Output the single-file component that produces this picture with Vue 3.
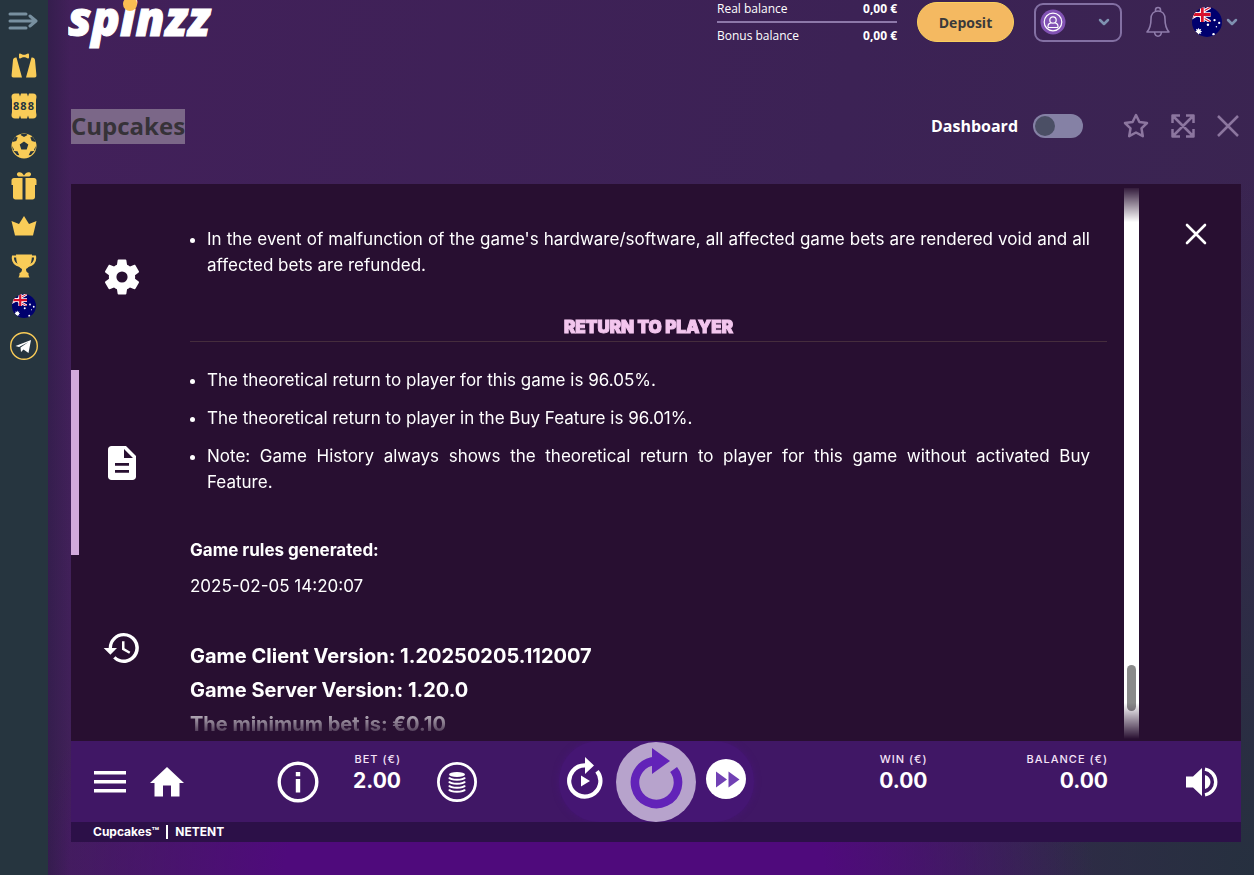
<template>
  <div class="page">
    <!-- shared flag symbol -->
    <svg class="defs" aria-hidden="true">
      <defs>
        <clipPath id="flagRound"><circle cx="16" cy="16" r="16" /></clipPath>
        <clipPath id="flagCanton"><rect width="20" height="16" /></clipPath>
        <symbol id="flag-au" viewBox="0 0 32 32">
          <g clip-path="url(#flagRound)">
            <rect width="32" height="32" fill="#00006e" />
            <g clip-path="url(#flagCanton)">
              <path d="M-8 0 20 16M20 0-8 16" stroke="#fff" stroke-width="3.4" />
              <path d="M-8 0 20 16M20 0-8 16" stroke="#d8102c" stroke-width="1.2" />
              <path d="M11 0v16M0 8h20" stroke="#fff" stroke-width="5" />
              <path d="M11 0v16M0 8h20" stroke="#d8102c" stroke-width="3" />
            </g>
            <path d="m7 22 .9 2 2-.8-.9 2 2 .9-2 .8.9 2-2-.8-.9 2-.8-2-2 .8.8-2-2-.8 2-.9-.8-2 2 .8z" fill="#fff" />
            <g fill="#fff">
              <circle cx="17" cy="19" r="1.3" />
              <circle cx="24" cy="14" r="1.2" />
              <circle cx="29" cy="17" r="1.2" />
              <circle cx="26" cy="21" r=".8" />
              <circle cx="23" cy="29" r="1.3" />
            </g>
          </g>
        </symbol>
      </defs>
    </svg>

    <aside class="sidebar">
      <button class="side-toggle" type="button" aria-label="Menu">
        <svg width="30" height="18" viewBox="0 0 30 18" fill="none" stroke="#7890a0" stroke-width="3" stroke-linecap="round" stroke-linejoin="round">
          <path d="M2 2h16M2 9h25M2 16h16M22 4l6 5-6 5" />
        </svg>
      </button>
      <nav class="side-nav">
        <a v-for="item in sideItems" :key="item" href="#" :aria-label="item">
          <svg v-if="item === 'live'" width="26" height="26" viewBox="0 0 26 26" fill="#f9cc58">
            <path d="M8 1.5c0-1 .7-1.3 1.6-.8l2.3 1h2.2l2.3-1c.9-.5 1.6-.2 1.6.8v3c0 .9-.7 1.2-1.6.8l-2.3-1h-2.2l-2.3 1C8.700 5.700 8 5.400 8 4.500z" />
            <path d="M5.500 4.500 11 24.500H2.500C1 24.500.5 23.700.6 22L2 7c.2-1.800 1.500-2.800 3.500-2.500zM20.500 4.500 15 24.500h8.500c1.500 0 2-.8 1.900-2.500L24 7c-.2-1.800-1.500-2.800-3.500-2.500z" />
          </svg>
          <svg v-else-if="item === 'slots'" width="26" height="26" viewBox="0 0 26 26">
            <path d="M4 .5h4l1 3 1-3h6l1 3 1-3h4c2.500 0 3.500 1.500 3.500 3.500l-.5 3v12l.5 3c0 2-1 3.500-3.500 3.500h-4l-1-3-1 3h-6l-1-3-1 3H4C1.500 25.500.5 24 .5 22l.5-3V7l-.5-3C.5 2 1.500.5 4 .5z" fill="#f9cc58" />
            <text x="13" y="17" text-anchor="middle" class="slot-num">888</text>
          </svg>
          <svg v-else-if="item === 'sport'" width="26" height="26" viewBox="0 0 26 26">
            <circle cx="13" cy="13" r="12.500" fill="#f9cc58" />
            <path d="m13 8.500 4.300 3.100-1.600 5h-5.400l-1.600-5zM9.500 2l3.500 2 3.500-2-1-1h-5zM1.500 9l3.800-1 1.400-3.800L4.500 4 1.500 7.500zM24.500 9l-3.800-1-1.400-3.800 2.200-.2 3 3.500zM2.500 18l4 .2 1.800 4-2.300-.2zM23.500 18l-4 .2-1.800 4 2.300-.2zM1 13l2 3.500-1 1.500zM25 13l-2 3.500 1 1.500z" fill="#26353f" />
          </svg>
          <svg v-else-if="item === 'bonus'" width="26" height="30" viewBox="0 0 26 30" fill="#f9cc58">
            <path d="M13 4.500C11.500 1.500 9 .5 7 1.500c-2 1.200-1 4 1.500 4h9c2.500 0 3.500-2.800 1.500-4-2-1-4.500 0-6 3zM3 7h8.500v21.500H4.500c-1.500 0-2.500-1-2.500-2.500V14H.5V9.500C.5 8 1.500 7 3 7zM14.500 7H23c1.500 0 2.500 1 2.500 2.500V14H24v12c0 1.500-1 2.500-2.500 2.500h-7z" />
          </svg>
          <svg v-else-if="item === 'vip'" width="26" height="20" viewBox="0 0 26 20" fill="#f9cc58">
            <path d="M.5 5 8 8l5-8 5 8 7.500-3L22 19.500H4z" />
          </svg>
          <svg v-else-if="item === 'tournaments'" width="26" height="24" viewBox="0 0 26 24">
            <path d="M5.500 2.500H2C1.300 7 3.500 10.500 9 12M20.500 2.500H24c.7 4.500-1.500 8-7 9.500" fill="none" stroke="#f9cc58" stroke-width="2.200" />
            <path d="M5 .5h16c0 7-1.500 12-6 14.500 0 2.200.8 3.500 2.500 4V21l1 2.500h-11l1-2.500v-2c1.700-.5 2.500-1.800 2.500-4C6.500 12.500 5 7.500 5 .5z" fill="#f9cc58" />
          </svg>
          <svg v-else-if="item === 'language'" width="24" height="24"><use href="#flag-au" /></svg>
          <svg v-else width="28" height="28" viewBox="0 0 28 28">
            <circle cx="14" cy="14" r="13.300" fill="none" stroke="#f9cc58" stroke-width="1.400" />
            <path d="M5.500 14 21 8l-2.500 13-5-3.500-2.500 2.500-.5-4.500 8-5.500-9.500 5z" fill="#fff" />
          </svg>
        </a>
      </nav>
    </aside>

    <main class="main">
      <header class="header">
        <a class="logo" href="#" aria-label="spinzz">
          <svg width="160" height="50" viewBox="0 0 160 50">
            <text x="0" y="36" class="logo-text">spinzz</text>
            <circle cx="62" cy="4" r="7" fill="#fbbd52" />
          </svg>
        </a>
        <dl class="balances">
          <div><dt>Real balance</dt><dd>0,00 €</dd></div>
          <div><dt>Bonus balance</dt><dd>0,00 €</dd></div>
        </dl>
        <button class="deposit" type="button">Deposit</button>
        <button class="profile" type="button" aria-label="Profile">
          <svg width="26" height="26" viewBox="0 0 26 26" fill="none" stroke="#fff" stroke-width="1.200">
            <circle cx="13" cy="13" r="12.500" fill="#8253b4" stroke="none" />
            <circle cx="13" cy="13" r="8.800" />
            <circle cx="13" cy="11" r="3.200" />
            <path d="M8 18.500v-1.200c0-2.300 1.500-3.300 3.300-3.500M18 18.500v-1.200c0-2.300-1.500-3.300-3.300-3.500M8 18.500h10" />
          </svg>
          <svg class="chevron" width="12" height="8" viewBox="0 0 12 8"><path d="m2 2 4 4 4-4" /></svg>
        </button>
        <button class="bell" type="button" aria-label="Notifications">
          <svg width="24" height="32" viewBox="0 0 24 32" fill="none" stroke="#8f7cab" stroke-width="1.600" stroke-linejoin="round">
            <path d="M9.500 5.500V4a2.500 2.500 0 0 1 5 0v1.500M12 5c-4.500 0-7 3.500-7 8 0 6-.8 9.500-4 13h22c-3.200-3.500-4-7-4-13 0-4.500-2.500-8-7-8zM8.500 26c.3 2.800 1.500 4.200 3.500 4.200s3.200-1.400 3.500-4.200" />
          </svg>
        </button>
        <button class="locale" type="button" aria-label="Language">
          <svg width="30" height="30"><use href="#flag-au" /></svg>
          <svg class="chevron" width="12" height="8" viewBox="0 0 12 8"><path d="m2 2 4 4 4-4" /></svg>
        </button>
      </header>

      <div class="title-row">
        <h1><span>Cupcakes</span></h1>
        <label class="dashboard">
          Dashboard
          <input v-model="dashboard" type="checkbox" role="switch">
        </label>
        <div class="tools">
          <button type="button" aria-label="Favourite">
            <svg width="26" height="26" viewBox="0 0 26 26"><path d="m13 2 3.400 7 7.600 1-5.500 5.400 1.300 7.800L13 19.500l-6.800 3.700 1.300-7.800L2 10l7.600-1z" /></svg>
          </button>
          <button type="button" aria-label="Fullscreen">
            <svg width="24" height="24" viewBox="0 0 24 24"><path d="M1.500 9V1.500H9M15 1.500h7.500V9M22.500 15v7.500H15M9 22.500H1.500V15M2 2l20 20M22 2 2 22" /></svg>
          </button>
          <button type="button" aria-label="Close game">
            <svg width="22" height="22" viewBox="0 0 22 22"><path d="m1 1 20 20M21 1 1 21" /></svg>
          </button>
        </div>
      </div>

      <section class="game">
        <div class="stage">
          <nav class="tabs">
            <button v-for="tab in tabs" :key="tab" type="button" :class="{ active: tab === activeTab }" :aria-label="tab" @click="activeTab = tab">
              <svg v-if="tab === 'settings'" width="42" height="42" viewBox="0 0 24 24" fill="#fff">
                <path d="M19.430 12.980c.04-.32.07-.64.07-.98s-.03-.66-.07-.98l2.110-1.650c.19-.15.24-.42.12-.64l-2-3.460c-.12-.22-.39-.3-.61-.22l-2.490 1c-.52-.4-1.080-.73-1.690-.98l-.38-2.650C14.460 2.180 14.250 2 14 2h-4c-.25 0-.46.18-.49.42l-.38 2.650c-.61.25-1.170.59-1.690.98l-2.490-1c-.23-.09-.49 0-.61.22l-2 3.460c-.13.22-.07.49.12.64l2.110 1.650c-.04.32-.07.65-.07.98s.03.66.07.98l-2.110 1.650c-.19.15-.24.42-.12.64l2 3.460c.12.22.39.3.61.22l2.490-1c.52.4 1.080.73 1.690.98l.38 2.650c.03.24.24.42.49.42h4c.25 0 .46-.18.49-.42l.38-2.650c.61-.25 1.170-.59 1.690-.98l2.490 1c.23.09.49 0 .61-.22l2-3.460c.12-.22.07-.49-.12-.64zM12 15.200a3.200 3.200 0 1 1 0-6.400 3.200 3.200 0 0 1 0 6.400z" />
              </svg>
              <svg v-else-if="tab === 'rules'" width="28" height="34" viewBox="0 0 28 34">
                <path d="M3.500 0H18l10 10v20.500c0 2-1.500 3.500-3.500 3.500h-21C1.500 34 0 32.500 0 30.500v-27C0 1.500 1.500 0 3.500 0z" fill="#fff" />
                <path d="M16 3v9h9zM7 17h14v2.800H7zM7 24h14v2.800H7z" fill="#280f31" />
              </svg>
              <svg v-else width="40" height="40" viewBox="0 0 24 24" fill="#fff">
                <path d="M13 3a9 9 0 0 0-9 9H1l3.900 3.900.1.100L9 12H6a7 7 0 1 1 2.100 4.900l-1.400 1.400A9 9 0 1 0 13 3zm-1 5v5l4.300 2.500.7-1.200-3.500-2.100V8z" />
              </svg>
            </button>
          </nav>

          <div class="scroller">
            <div class="rules">
              <ul>
                <li>In the event of malfunction of the game's hardware/software, all affected game bets are rendered void and all affected bets are refunded.</li>
              </ul>
              <h2>RETURN TO PLAYER</h2>
              <ul>
                <li v-for="line in rtpLines" :key="line">{{ line }}</li>
              </ul>
              <div class="generated">
                <strong>Game rules generated:</strong>
                <p>2025-02-05 14:20:07</p>
              </div>
              <div class="versions">
                <p>Game Client Version: 1.20250205.112007</p>
                <p>Game Server Version: 1.20.0</p>
                <p>The minimum bet is: €0.10</p>
              </div>
            </div>
            <div class="track"><div class="thumb"></div></div>
          </div>

          <div class="close-col">
            <button type="button" aria-label="Close rules">
              <svg width="22" height="22" viewBox="0 0 22 22" fill="none" stroke="#fff" stroke-width="2.600" stroke-linecap="round"><path d="m2 2 18 18M20 2 2 20" /></svg>
            </button>
          </div>
        </div>

        <div class="bar">
          <div class="bar-left">
            <button type="button" aria-label="Game menu">
              <svg width="32" height="22" viewBox="0 0 32 22" fill="#fff"><path d="M0 0h32v3.500H0zM0 9h32v3.500H0zM0 18h32v3.500H0z" /></svg>
            </button>
            <button class="home" type="button" aria-label="Home">
              <svg width="34" height="30" viewBox="0 0 34 30" fill="#fff"><path d="M17 0 34 16h-4.500v13.500H21v-11h-8v11H4.500V16H0z" /></svg>
            </button>
            <button class="info" type="button" aria-label="Info">
              <svg width="42" height="42" viewBox="0 0 42 42"><circle cx="21" cy="21" r="18.800" fill="none" stroke="#fff" stroke-width="3.400" /><path d="M18.800 11h4.400v4.200h-4.400zM18.800 18h4.400v13.500h-4.400z" fill="#fff" /></svg>
            </button>
            <div class="meter bet"><span>BET (€)</span><b>2.00</b></div>
            <button class="coins" type="button" aria-label="Bet level">
              <svg width="40" height="42" viewBox="0 0 40 42" fill="none" stroke="#fff">
                <circle cx="20" cy="21" r="18.600" stroke-width="2.800" />
                <ellipse cx="20" cy="13.500" rx="8" ry="2.600" fill="#fff" stroke="none" />
                <path d="M12 16.500c2 3 14 3 16 0M12 20.500c2 3 14 3 16 0M12 24.500c2 3 14 3 16 0M12 28.500c2 3 14 3 16 0" stroke-width="2.200" />
              </svg>
            </button>
          </div>

          <div class="bar-mid">
            <button class="side-spin" type="button" aria-label="Autoplay">
              <svg width="36" height="44" viewBox="0 0 36 44">
                <path d="M30 14.300A15.600 15.600 0 1 1 18 8.400" fill="none" stroke="#fff" stroke-width="4.200" />
                <path d="M18 0v17l9-8.500zM14 18.500v11l9-5.500z" fill="#fff" />
              </svg>
            </button>
            <button class="spin" type="button" aria-label="Spin">
              <svg width="80" height="80" viewBox="0 0 80 80">
                <path d="M57.600 27.500A21.500 21.500 0 1 1 40 19" fill="none" stroke="#6223b8" stroke-width="8.600" />
                <path d="M36 6v26l18-13z" fill="#6223b8" />
              </svg>
            </button>
            <button class="side-spin" type="button" aria-label="Fast play">
              <svg width="40" height="40" viewBox="0 0 40 40"><circle cx="20" cy="20" r="20" fill="#fff" /><path d="M10 12.500v16l11-8zM22.500 12.500v16l11-8z" fill="#7141b4" /></svg>
            </button>
          </div>

          <div class="bar-right">
            <div class="meter"><span>WIN (€)</span><b>0.00</b></div>
            <div class="meter balance"><span>BALANCE (€)</span><b>0.00</b></div>
            <button type="button" aria-label="Sound">
              <svg width="34" height="32" viewBox="0 0 34 32" fill="#fff">
                <path d="M1 10.500h7L17 2v28l-9-8.500H1zM20 9c3.500 1 5.500 3.800 5.500 7s-2 6-5.500 7z" />
                <path d="M20 3.200a13 13 0 0 1 0 25.600" fill="none" stroke="#fff" stroke-width="3.400" />
              </svg>
            </button>
          </div>
        </div>

        <footer class="game-foot"><span>Cupcakes™</span><i></i><span>NETENT</span></footer>
      </section>
    </main>
  </div>
</template>

<script setup>
import { ref } from 'vue'

const sideItems = ['live', 'slots', 'sport', 'bonus', 'vip', 'tournaments', 'language', 'telegram']
const tabs = ['settings', 'rules', 'history']
const activeTab = ref('rules')
const dashboard = ref(false)

const rtpLines = [
  'The theoretical return to player for this game is 96.05%.',
  'The theoretical return to player in the Buy Feature is 96.01%.',
  'Note: Game History always shows the theoretical return to player for this game without activated Buy Feature.',
]
</script>

<style>
body { margin:0; background:#3c2255; }
</style>

<style scoped>
* { box-sizing:border-box; }
button { padding:0; border:0; background:none; font:inherit; color:inherit; cursor:pointer; }
svg { display:block; flex:none; }
p, h1, h2, ul, dl, dd { margin:0; padding:0; }
.defs { position:absolute; width:0; height:0; }

.page { display:flex; height:100vh; min-height:720px; color:#fff; font-family:"Open Sans","Noto Sans",sans-serif; }

.sidebar { width:48px; flex:none; background:#26353f; }
.side-toggle { display:flex; width:100%; height:46px; padding:12px 2px 0 0; justify-content:center; }
.side-nav a { display:flex; height:40px; align-items:center; justify-content:center; }
.slot-num { font:700 11px "Open Sans",sans-serif; letter-spacing:1px; fill:#26353f; }

.main {
  flex:1; min-width:0; display:flex; flex-direction:column; padding:0 13px 33px 23px;
  background:
    linear-gradient(90deg, rgba(40,28,65,.5), rgba(40,28,65,0) 22px),
    radial-gradient(ellipse 540px 300px at 42% 100%, #4f0a7c 0%, #4f0a7c 50%, rgba(79,10,124,0) 100%),
    radial-gradient(ellipse 500px 700px at 100% 100%, #26303f 0%, rgba(38,48,63,0) 100%),
    linear-gradient(100deg, #42205a 0%, #3c2255 60%, #3a2550 100%);
}

.header { display:flex; align-items:center; height:44px; padding-right:3px; }
.logo { margin:0 auto 0 -3px; align-self:flex-start; }
.logo-text { font:italic 800 47px "Open Sans",sans-serif; fill:#fff; stroke:#fff; stroke-width:1px; }
.balances { width:180px; font-size:12px; line-height:17px; }
.balances div { display:flex; justify-content:space-between; }
.balances div:first-child { padding-bottom:4px; margin-bottom:4px; border-bottom:2px solid #8d78a9; }
.balances dd { font-weight:700; }
.deposit { width:97px; height:40px; margin-left:20px; border-radius:20px; border:1px solid #f9cf5e; background:#f4b961; color:#3a3a3a; font-size:14px; font-weight:700; }
.profile { display:flex; align-items:center; justify-content:space-between; width:88px; height:39px; margin-left:20px; padding:0 10px 0 4px; border:2px solid #8370a3; border-radius:9px; }
.chevron path { fill:none; stroke:#7f91b0; stroke-width:2.500; stroke-linecap:round; stroke-linejoin:round; }
.bell { margin-left:24px; }
.locale { display:flex; align-items:center; gap:4px; margin-left:22px; }

.title-row { display:flex; align-items:center; height:35px; margin:65px 0 40px; }
.title-row h1 { margin-right:auto; font-size:24px; line-height:33px; color:#363238; }
.title-row h1 span { display:block; padding-bottom:2px; background:#7b6788; }
.dashboard { display:flex; align-items:center; gap:15px; padding-bottom:2px; font-size:16px; font-weight:700; }
.dashboard input { appearance:none; width:50px; height:24px; margin:0; border-radius:12px; background:#8581a5; cursor:pointer; }
.dashboard input::before { content:''; display:block; width:20px; height:20px; margin:2px; border-radius:50%; background:#4b4f65; }
.dashboard input:checked::before { margin-left:28px; }
.tools { display:flex; align-items:center; gap:22px; margin:0 2px 0 40px; padding-bottom:2px; }
.tools svg { fill:none; stroke:#8c769f; stroke-width:2.500; stroke-linejoin:round; }

.game { flex:1; min-height:0; display:flex; flex-direction:column; font-family:Inter,"Liberation Sans",sans-serif; }
.stage { flex:1; min-height:0; display:flex; background:#280f31; overflow:hidden; }

.tabs { display:flex; flex-direction:column; width:102px; flex:none; }
.tabs button { flex:1; display:flex; align-items:center; justify-content:center; border:0 solid #d2a9dc; }
.tabs button.active { border-left-width:8px; padding-right:8px; }

.scroller {
  flex:1; min-width:0; display:flex; margin:2px 0; overflow:hidden;
  -webkit-mask-image:linear-gradient(transparent, #000 36px, #000 calc(100% - 36px), transparent);
  mask-image:linear-gradient(transparent, #000 36px, #000 calc(100% - 36px), transparent);
}
.rules { flex:1; min-width:0; padding:40px 17px 0; font-size:17px; line-height:26px; }
.rules ul { padding:0 17px; text-align:justify; list-style:none; }
.rules li { position:relative; }
.rules li + li { margin-top:12px; }
.rules li::before { content:''; position:absolute; left:-17px; top:12px; width:5px; height:5px; border-radius:50%; background:#fff; }
.rules li + li::after { content:'\00a0\00a0'; }
.rules h2 { margin:36px 0 25px; border-bottom:1px solid #452d3d; color:#f3c6ee; font-size:17px; font-weight:900; line-height:27px; text-align:center; -webkit-text-stroke:1px #f3c6ee; }
.generated { margin-top:42px; }
.generated p { margin-top:10px; }
.versions { margin-top:40px; font-size:20px; font-weight:700; line-height:34px; white-space:nowrap; }

.track { width:15px; flex:none; margin-top:2px; padding:0 3px; background:#fff; display:flex; flex-direction:column; justify-content:flex-end; }
.thumb { height:46px; margin-bottom:28px; border-radius:5px; background:#8a8a8a; }
.close-col { width:102px; flex:none; padding:39px 0 0 46px; }

.bar { display:grid; grid-template-columns:1fr auto 1fr; height:81px; background:#401765; }
.bar-left, .bar-mid, .bar-right { display:flex; align-items:center; }
.bar-left { padding-left:23px; }
.bar-right { justify-content:flex-end; padding-right:22px; }
.home { margin-left:24px; }
.info { margin-left:93px; }
.bet { margin-left:34px; }
.coins { margin-left:36px; }
.bar-mid { padding:0 8px; border-radius:40px; background:#451673; box-shadow:0 0 6px #451673; clip-path:inset(0 -8px); }
.spin { width:80px; height:80px; margin:0 10px 0 13px; border-radius:50%; background:#b7a3cc; }
.side-spin { padding-bottom:6px; }
.meter { display:flex; flex-direction:column; align-self:flex-start; align-items:flex-end; padding-top:10px; font-size:11px; font-weight:500; line-height:16px; color:#f5e3f8; letter-spacing:1px; }
.meter b { color:#fff; font-size:21px; font-weight:700; line-height:28px; letter-spacing:normal; }
.balance { margin:0 77px 0 99px; }

.game-foot { display:flex; align-items:center; height:20px; padding-left:22px; background:#2c1048; font-size:12px; line-height:18px; font-weight:700; }
.game-foot i { width:2px; height:14px; margin:0 7px; background:#fff; }
</style>
